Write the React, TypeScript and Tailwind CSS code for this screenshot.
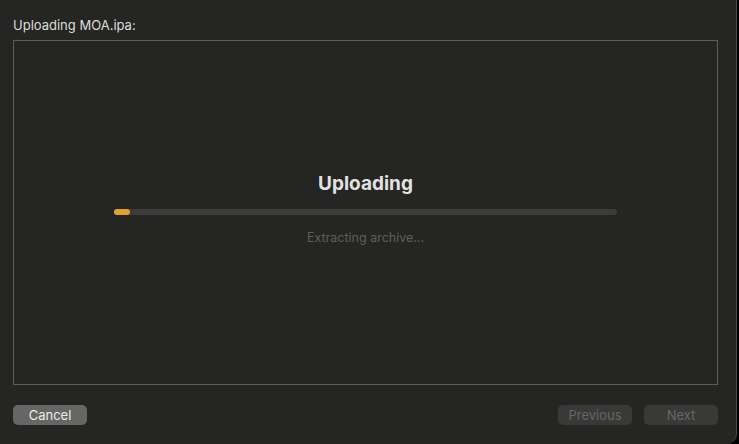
export default function App() {
  return (
    <div className="h-[444px] w-[739px] bg-black">
      <div
        className="flex h-full w-[737px] flex-col rounded-br-[10px] border-r border-[#4a4a4a] bg-[#252523] px-[13px] pt-[15px] pb-[19px] text-[#dcdcdc]"
        style={{ fontFamily: "Inter, 'Liberation Sans', sans-serif" }}
      >
        <div className="h-[20px] text-[13px] leading-[20px]">Uploading MOA.ipa:</div>
        <div className="mt-[5px] flex h-[345px] w-[705px] flex-col items-center border border-[#5c5c5a] pt-[130px]">
          <div className="text-[19px] font-bold leading-[26px] text-[#e2e2e2]">Uploading</div>
          <div className="mt-[12px] h-[6px] w-[503px] rounded-full bg-[#3c3c3b]">
            <div className="h-full w-[16px] rounded-full bg-[#dfa133]" />
          </div>
          <div className="mt-[14px] text-[12.5px] leading-[18px] text-[#5f5f5d]">Extracting archive...</div>
        </div>
        <div className="mt-auto flex w-[705px] items-center">
          <button className="h-[20px] w-[74px] rounded-[5px] bg-[#666665] text-[13px] leading-[20px] text-[#ececec]">
            Cancel
          </button>
          <div className="ml-auto flex gap-[12px]">
            <button className="h-[20px] w-[74px] rounded-[5px] bg-[#393938] text-[13px] leading-[20px] text-[#676766]">
              Previous
            </button>
            <button className="h-[20px] w-[74px] rounded-[5px] bg-[#393938] text-[13px] leading-[20px] text-[#676766]">
              Next
            </button>
          </div>
        </div>
      </div>
    </div>
  );
}
